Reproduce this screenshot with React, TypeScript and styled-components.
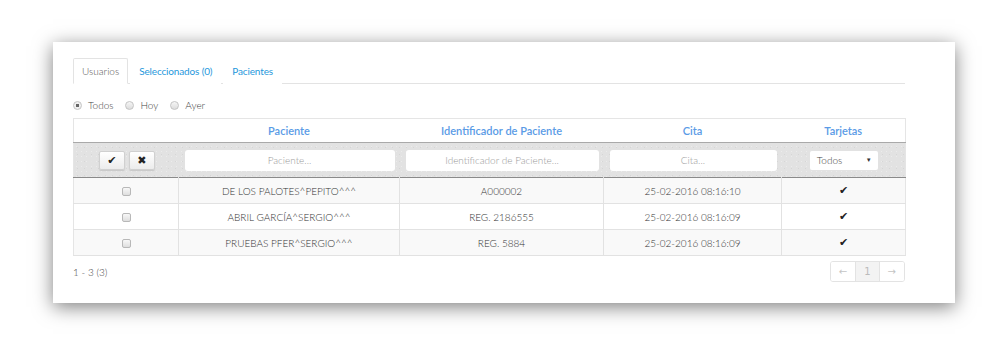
import React, { useState } from 'react';
import styled, { createGlobalStyle } from 'styled-components';

type Patient = {
  name: string;
  id: string;
  date: string;
};

const patients: Patient[] = [
  { name: 'DE LOS PALOTES^PEPITO^^^', id: 'A000002', date: '25-02-2016 08:16:10' },
  { name: 'ABRIL GARCÍA^SERGIO^^^', id: 'REG. 2186555', date: '25-02-2016 08:16:09' },
  { name: 'PRUEBAS PFER^SERGIO^^^', id: 'REG. 5884', date: '25-02-2016 08:16:09' },
];

const tabs = ['Usuarios', 'Seleccionados (0)', 'Pacientes'];
const ranges = ['Todos', 'Hoy', 'Ayer'];

const App = () => {
  const [activeTab, setActiveTab] = useState('Usuarios');
  const [range, setRange] = useState('Todos');

  return (
    <>
      <GlobalStyle />
      <Page>
        <Panel>
          <TabBar>
            {tabs.map(tab => (
              <Tab
                key={tab}
                $active={tab === activeTab}
                onClick={() => setActiveTab(tab)}
              >
                {tab}
              </Tab>
            ))}
          </TabBar>

          <RangeRow>
            {ranges.map(r => (
              <RangeOption key={r} onClick={() => setRange(r)}>
                <RadioDot $checked={r === range} />
                {r}
              </RangeOption>
            ))}
          </RangeRow>

          <Grid>
            <colgroup>
              <col style={{ width: 105 }} />
              <col style={{ width: 221 }} />
              <col style={{ width: 204 }} />
              <col style={{ width: 178 }} />
              <col style={{ width: 124 }} />
            </colgroup>
            <thead>
              <HeadRow>
                <HeadCell />
                <HeadCell>Paciente</HeadCell>
                <HeadCell>Identificador de Paciente</HeadCell>
                <HeadCell>Cita</HeadCell>
                <HeadCell>Tarjetas</HeadCell>
              </HeadRow>
              <FilterRow>
                <FilterCell>
                  <ActionGroup>
                    <ActionButton>✔</ActionButton>
                    <ActionButton>✖</ActionButton>
                  </ActionGroup>
                </FilterCell>
                <FilterCell>
                  <FilterInput placeholder='Paciente...' />
                </FilterCell>
                <FilterCell>
                  <FilterInput placeholder='Identificador de Paciente...' />
                </FilterCell>
                <FilterCell>
                  <FilterInput placeholder='Cita...' />
                </FilterCell>
                <FilterCell>
                  <FakeSelect>
                    Todos
                    <Caret>▼</Caret>
                  </FakeSelect>
                </FilterCell>
              </FilterRow>
            </thead>
            <tbody>
              {patients.map((p, i) => (
                <BodyRow key={p.id} $striped={i % 2 === 0}>
                  <BodyCell>
                    <CheckBox />
                  </BodyCell>
                  <BodyCell>{p.name}</BodyCell>
                  <BodyCell>{p.id}</BodyCell>
                  <BodyCell>{p.date}</BodyCell>
                  <BodyCell>
                    <Tick>✔</Tick>
                  </BodyCell>
                </BodyRow>
              ))}
            </tbody>
          </Grid>

          <Footer>
            <Count>1 - 3 (3)</Count>
            <Pager>
              <PageItem $disabled>←</PageItem>
              <PageItem $current>1</PageItem>
              <PageItem $disabled>→</PageItem>
            </Pager>
          </Footer>
        </Panel>
      </Page>
    </>
  );
};

export default App;

const GlobalStyle = createGlobalStyle`
  html, body {
    margin: 0;
    padding: 0;
    background: #ffffff;
    font-family: Lato, 'Liberation Sans', sans-serif;
  }
  * {
    box-sizing: border-box;
  }
`;

const Page = styled.div`
  width: 989px;
  height: 346px;
  padding: 42px 0 0 53px;
  overflow: hidden;
`;

const Panel = styled.div`
  width: 902px;
  height: 261px;
  background: #fff;
  padding: 16px 50px 0 20px;
  box-shadow: 0 4px 18px rgba(0, 0, 0, 0.5);
`;

const TabBar = styled.div`
  display: flex;
  height: 26px;
  border-bottom: 1px solid #e3e3e3;
`;

const Tab = styled.div<{ $active?: boolean }>`
  height: 26px;
  padding: 0 8px;
  margin-right: 2px;
  display: flex;
  align-items: center;
  font-size: 10px;
  font-weight: ${p => (p.$active ? 300 : 400)};
  letter-spacing: ${p => (p.$active ? '0' : '-0.15px')};
  color: ${p => (p.$active ? '#555' : '#1f98dc')};
  background: #fff;
  border: 1px solid ${p => (p.$active ? '#e3e3e3' : 'transparent')};
  border-bottom-color: ${p => (p.$active ? '#fff' : 'transparent')};
  border-radius: 2px 2px 0 0;
  cursor: pointer;
`;

const RangeRow = styled.div`
  display: flex;
  align-items: center;
  gap: 12px;
  height: 16px;
  margin: 13px 0 5px;
`;

const RangeOption = styled.label`
  display: flex;
  align-items: center;
  gap: 6px;
  font-size: 10px;
  font-weight: 300;
  color: #444;
  cursor: pointer;
`;

const RadioDot = styled.span<{ $checked?: boolean }>`
  width: 9px;
  height: 9px;
  border-radius: 50%;
  border: 1px solid #c4c4c4;
  background: ${p =>
    p.$checked
      ? 'radial-gradient(circle, #666 0 1.6px, #f0f0f0 2px)'
      : 'linear-gradient(#f6f6f6, #dcdcdc)'};
`;

const Grid = styled.table`
  width: 832px;
  table-layout: fixed;
  border-collapse: collapse;
  border: 1px solid #e5e5e5;
  border-bottom: 1px solid #e0e0e0;
`;

const HeadRow = styled.tr`
  height: 24px;
  background: #fff;
`;

const HeadCell = styled.th`
  padding: 0;
  font-size: 11px;
  font-weight: 600;
  color: #5a9be6;
  text-align: center;
`;

const FilterRow = styled.tr`
  height: 35px;
  background-color: #e2e2e2;
  background-image: radial-gradient(rgba(255, 255, 255, 0.35) 0.6px, transparent 0.8px),
    radial-gradient(rgba(0, 0, 0, 0.05) 0.6px, transparent 0.8px);
  background-size: 5px 5px, 7px 7px;
  border-top: 1px solid #a9a9a9;
  border-bottom: 1px solid #8a8a8a;
`;

const FilterCell = styled.td`
  padding: 0 5px 0 6px;
  vertical-align: middle;
`;

const ActionGroup = styled.div`
  display: flex;
  justify-content: center;
  gap: 4px;
`;

const ActionButton = styled.button`
  width: 26px;
  height: 19px;
  padding: 0;
  border: 1px solid #d0d0d0;
  border-radius: 2px;
  background: linear-gradient(#ffffff, #ececec);
  box-shadow: 0 1px 1px rgba(0, 0, 0, 0.12);
  font-family: 'DejaVu Sans', sans-serif;
  font-size: 11px;
  color: #222;
  line-height: 17px;
`;

const FilterInput = styled.input`
  display: block;
  width: 100%;
  height: 21px;
  border: none;
  border-radius: 3px;
  background: #fff;
  outline: none;
  text-align: center;
  font-family: Lato, 'Liberation Sans', sans-serif;
  font-size: 10px;
  font-weight: 300;
  color: #555;
  &::placeholder {
    color: #999;
  }
`;

const FakeSelect = styled.div`
  position: relative;
  width: 68px;
  height: 19px;
  margin: 0 auto;
  padding-left: 7px;
  border-radius: 2px;
  background: #fff;
  display: flex;
  align-items: center;
  font-size: 10px;
  font-weight: 300;
  color: #444;
`;

const Caret = styled.span`
  position: absolute;
  right: 6px;
  top: 5px;
  font-family: 'DejaVu Sans', sans-serif;
  font-size: 6px;
  color: #333;
`;

const BodyRow = styled.tr<{ $striped?: boolean }>`
  height: 26px;
  background: ${p => (p.$striped ? '#f9f9f9' : '#fff')};
  border-bottom: 1px solid #e2e2e2;
`;

const BodyCell = styled.td`
  padding: 0;
  border-left: 1px solid #e2e2e2;
  text-align: center;
  vertical-align: middle;
  font-size: 10px;
  font-weight: 300;
  color: #333;
  &:first-child {
    border-left: none;
  }
`;

const CheckBox = styled.span`
  display: inline-block;
  width: 9px;
  height: 9px;
  margin-top: 3px;
  border: 1px solid #b8b8b8;
  border-radius: 2px;
  background: linear-gradient(#f8f8f8, #dedede);
`;

const Tick = styled.span`
  font-family: 'DejaVu Sans', sans-serif;
  font-size: 11px;
  color: #222;
`;

const Footer = styled.div`
  display: flex;
  justify-content: space-between;
  align-items: center;
  width: 832px;
  margin-top: 5px;
`;

const Count = styled.span`
  font-size: 10px;
  font-weight: 300;
  color: #444;
`;

const Pager = styled.div`
  display: flex;
  border: 1px solid #e3e3e3;
  border-radius: 3px;
  overflow: hidden;
`;

const PageItem = styled.span<{ $current?: boolean; $disabled?: boolean }>`
  height: 19px;
  padding: 0 8px;
  display: flex;
  align-items: center;
  font-family: 'DejaVu Sans', sans-serif;
  font-size: 10px;
  color: ${p => (p.$disabled ? '#c4c4c4' : '#bbb')};
  background: ${p => (p.$current ? '#f3f3f3' : '#fff')};
  & + & {
    border-left: 1px solid #e3e3e3;
  }
`;
